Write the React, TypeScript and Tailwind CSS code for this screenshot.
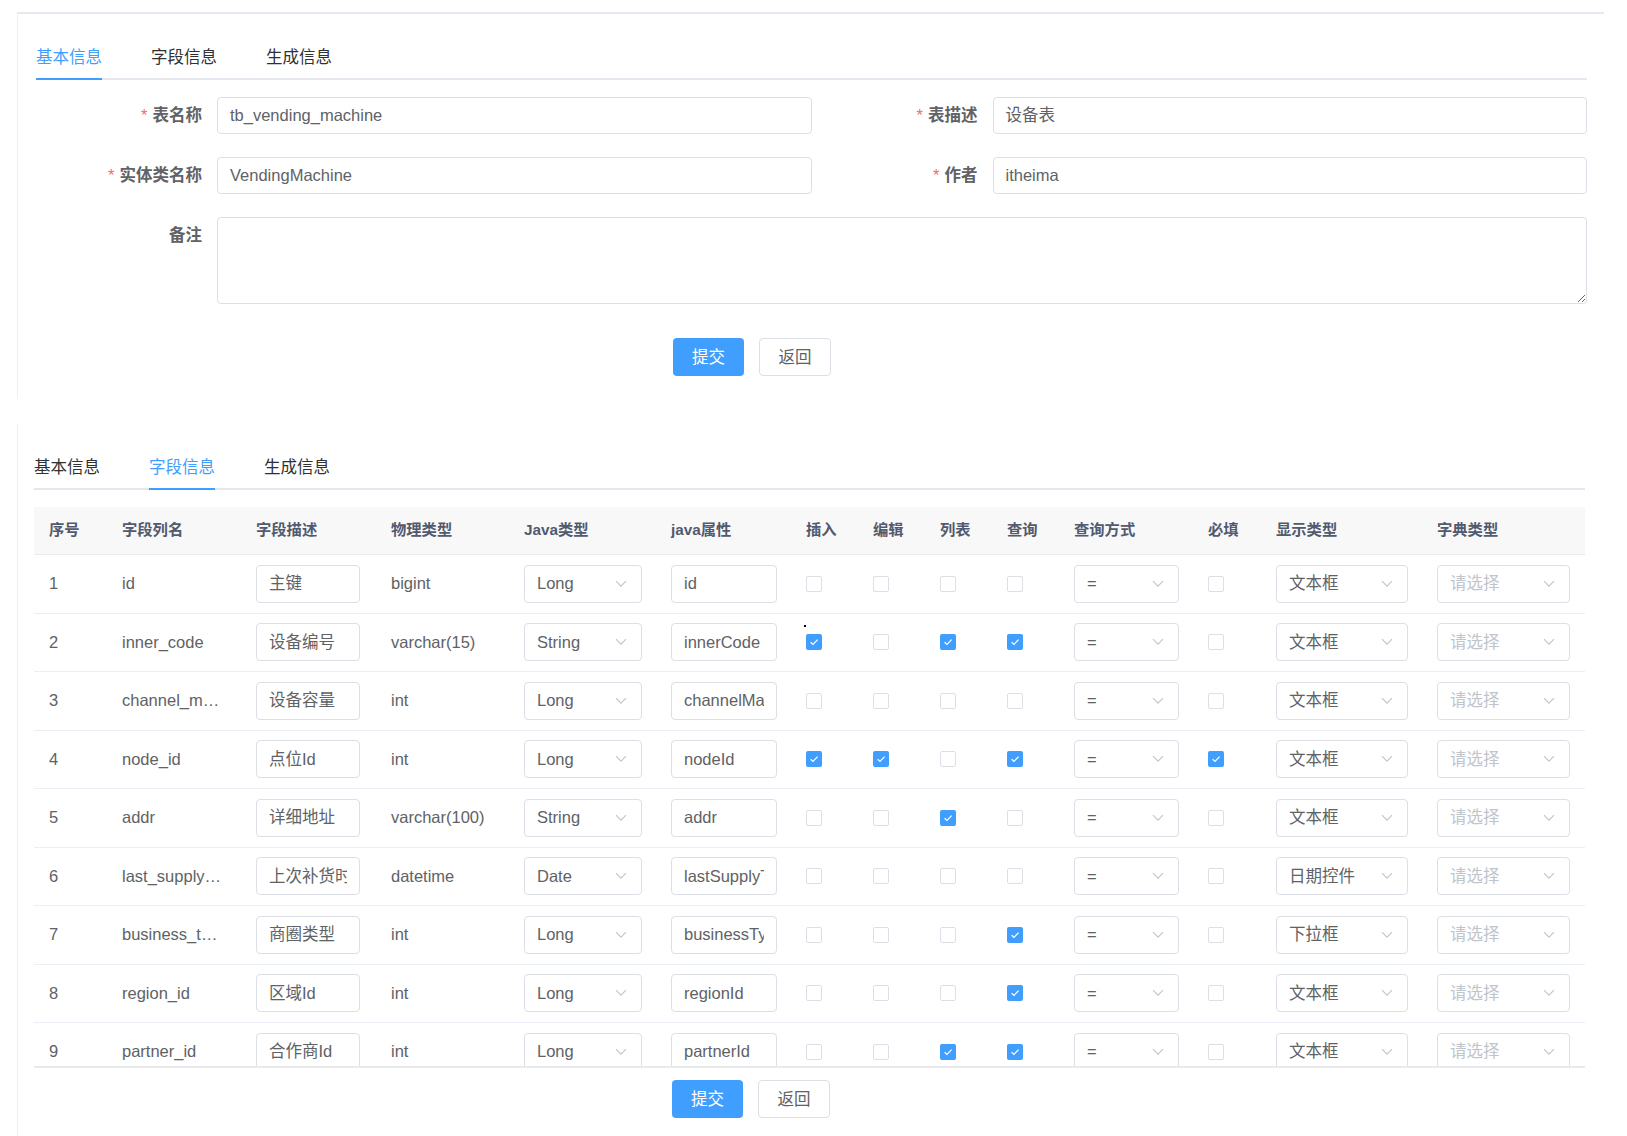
import React from "react";

const font = "font-['Liberation_Sans','Noto_Sans_CJK_SC',sans-serif]";

// grid used by the header and every row of the field table
const cols =
  "grid grid-cols-[88px_134px_135px_133px_147px_135px_67px_67px_67px_67px_134px_68px_161px_148px]";

type Row = {
  no: number;
  name: string;
  desc: string;
  type: string;
  javaType: string;
  javaField: string;
  ins: boolean;
  edit: boolean;
  list: boolean;
  query: boolean;
  req: boolean;
  show: string;
};

const rows: Row[] = [
  { no: 1, name: "id", desc: "主键", type: "bigint", javaType: "Long", javaField: "id", ins: false, edit: false, list: false, query: false, req: false, show: "文本框" },
  { no: 2, name: "inner_code", desc: "设备编号", type: "varchar(15)", javaType: "String", javaField: "innerCode", ins: true, edit: false, list: true, query: true, req: false, show: "文本框" },
  { no: 3, name: "channel_m…", desc: "设备容量", type: "int", javaType: "Long", javaField: "channelMaxCapacity", ins: false, edit: false, list: false, query: false, req: false, show: "文本框" },
  { no: 4, name: "node_id", desc: "点位Id", type: "int", javaType: "Long", javaField: "nodeId", ins: true, edit: true, list: false, query: true, req: true, show: "文本框" },
  { no: 5, name: "addr", desc: "详细地址", type: "varchar(100)", javaType: "String", javaField: "addr", ins: false, edit: false, list: true, query: false, req: false, show: "文本框" },
  { no: 6, name: "last_supply…", desc: "上次补货时间", type: "datetime", javaType: "Date", javaField: "lastSupplyTime", ins: false, edit: false, list: false, query: false, req: false, show: "日期控件" },
  { no: 7, name: "business_t…", desc: "商圈类型", type: "int", javaType: "Long", javaField: "businessType", ins: false, edit: false, list: false, query: true, req: false, show: "下拉框" },
  { no: 8, name: "region_id", desc: "区域Id", type: "int", javaType: "Long", javaField: "regionId", ins: false, edit: false, list: false, query: true, req: false, show: "文本框" },
  { no: 9, name: "partner_id", desc: "合作商Id", type: "int", javaType: "Long", javaField: "partnerId", ins: false, edit: false, list: true, query: true, req: false, show: "文本框" },
];

function Tabs({ active }: { active: number }) {
  const items = ["基本信息", "字段信息", "生成信息"];
  return (
    <div className="flex w-[1551px] border-b-2 border-[#e4e7ed]">
      {items.map((t, i) => (
        <div key={t} className="pr-[49px]">
          <div
            className={
              "h-[44px] -mb-[2px] flex items-center border-b-2 text-[16.5px] " +
              (i === active ? "border-[#409eff] text-[#409eff]" : "border-transparent text-[#303133]")
            }
          >
            {t}
          </div>
        </div>
      ))}
    </div>
  );
}

function Label({ text, required }: { text: string; required?: boolean }) {
  return (
    <div className="w-[181px] shrink-0 h-[37px] pr-[15px] flex items-center justify-end text-[16.5px] font-bold text-[#606266]">
      {required && <span className="mr-[5px] font-normal text-[#f56c6c]">*</span>}
      {text}
    </div>
  );
}

function FormItem({ label, value, required }: { label: string; value: string; required?: boolean }) {
  return (
    <div className="flex mb-[23px]">
      <Label text={label} required={required} />
      <div className="flex-1 h-[37px] border border-[#dcdfe6] rounded-[4px] px-[12px] flex items-center text-[16.5px] text-[#606266]">
        {value}
      </div>
    </div>
  );
}

function Buttons({ left }: { left: string }) {
  return (
    <div className={"flex gap-[15px] " + left}>
      <button className="w-[71px] h-[38px] rounded-[4px] bg-[#409eff] text-white text-[16.5px]">提交</button>
      <button className="w-[72px] h-[38px] rounded-[4px] border border-[#dcdfe6] bg-white text-[#606266] text-[16.5px]">返回</button>
    </div>
  );
}

function Chevron() {
  return (
    <svg width="12" height="8" viewBox="0 0 12 8" fill="none">
      <path d="M1 1.2L6 6.2L11 1.2" stroke="#c0c4cc" strokeWidth="1.1" />
    </svg>
  );
}

function Select({ w, value, placeholder }: { w: string; value?: string; placeholder?: string }) {
  return (
    <div className={w + " h-[38px] border border-[#dcdfe6] rounded-[4px] pl-[12px] pr-[14px] flex items-center justify-between"}>
      <span className={value ? "text-[#606266]" : "text-[#c0c4cc]"}>{value ?? placeholder}</span>
      <Chevron />
    </div>
  );
}

function TextBox({ w, value }: { w: string; value: string }) {
  return (
    <div className={w + " h-[38px] border border-[#dcdfe6] rounded-[4px] px-[12px] flex items-center"}>
      <div className="overflow-hidden whitespace-nowrap">{value}</div>
    </div>
  );
}

function Check({ on }: { on: boolean }) {
  return on ? (
    <div className="w-4 h-4 rounded-[2px] bg-[#409eff] flex items-center justify-center">
      <svg width="12" height="12" viewBox="0 0 12 12" fill="none">
        <path d="M2.6 6.2L5 8.5L9.6 3.6" stroke="white" strokeWidth="1.2" />
      </svg>
    </div>
  ) : (
    <div className="w-4 h-4 rounded-[2px] border border-[#dcdfe6] bg-white" />
  );
}

export default function App() {
  const heads = ["序号", "字段列名", "字段描述", "物理类型", "Java类型", "java属性", "插入", "编辑", "列表", "查询", "查询方式", "必填", "显示类型", "字典类型"];
  return (
    <div className={"min-h-[1136px] bg-white pt-[12px] pl-[17px] " + font}>
      {/* basic info card */}
      <section className="w-[1587px] h-[387px] border-t-2 border-l border-t-[#e6e9ef] border-l-[#f0f0f0] pl-[18px] pt-[22px]">
        <Tabs active={0} />
        <div className="mt-[17px] w-[1551px]">
          <div className="grid grid-cols-2">
            <FormItem label="表名称" value="tb_vending_machine" required />
            <FormItem label="表描述" value="设备表" required />
            <FormItem label="实体类名称" value="VendingMachine" required />
            <FormItem label="作者" value="itheima" required />
          </div>
          <div className="flex">
            <Label text="备注" />
            <textarea readOnly className="flex-1 h-[87px] border border-[#dcdfe6] rounded-[4px] outline-none" />
          </div>
          <div className="mt-[34px]">
            <Buttons left="pl-[637px]" />
          </div>
        </div>
      </section>

      {/* field info card */}
      <section className="mt-[25px] w-[1587px] h-[712px] border-l border-[#f0f0f0] pl-[16px] pt-[22px]">
        <Tabs active={1} />
        <div className="mt-[17px] w-[1551px]">
          <div className={cols + " h-[48px] items-center bg-[#f8f8f9] border-b border-[#e8eaec] text-[15.3px] font-bold text-[#515a6e]"}>
            {heads.map((h, i) => (
              <div key={h} className={i === 0 ? "pl-[15px]" : ""}>
                {h}
              </div>
            ))}
          </div>
          <div className="h-[513px] overflow-hidden border-b-2 border-[#e8eaec]">
            {rows.map((r) => (
              <div key={r.no} className={cols + " relative h-[58.5px] shrink-0 items-center border-b border-[#ebeef5] text-[16.5px] text-[#606266] whitespace-nowrap"}>
                <div className="pl-[15px]">{r.no}</div>
                <div>{r.name}</div>
                <TextBox w="w-[104px]" value={r.desc} />
                <div>{r.type}</div>
                <Select w="w-[118px]" value={r.javaType} />
                <TextBox w="w-[106px]" value={r.javaField} />
                <Check on={r.ins} />
                <Check on={r.edit} />
                <Check on={r.list} />
                <Check on={r.query} />
                <Select w="w-[105px]" value="=" />
                <Check on={r.req} />
                <Select w="w-[132px]" value={r.show} />
                <Select w="w-[133px]" placeholder="请选择" />
                {r.no === 2 && <span className="absolute left-[770px] top-[11px] w-[2px] h-[2px] bg-black" />}
              </div>
            ))}
          </div>
          <div className="mt-[12px]">
            <Buttons left="pl-[638px]" />
          </div>
        </div>
      </section>
    </div>
  );
}
